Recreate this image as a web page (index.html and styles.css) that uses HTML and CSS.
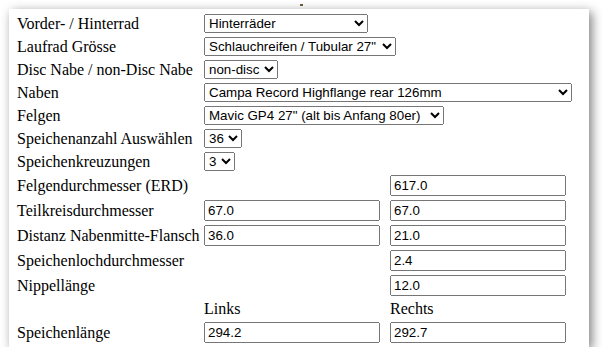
FILE: index.html
```html
<!DOCTYPE html>
<html>
<head>
    <meta charset="utf-8">
    <title>Speichenlängen Rechner</title>
    <link rel="stylesheet" href="styles.css">
</head>
<body>
    <span class="crumb"></span>
    <div class="sheet">
        <table class="calc">
            <tr>
                <td class="lbl">Vorder- / Hinterrad</td>
                <td colspan="2"><select class="sel-rad"><option>Hinterräder</option><option>Vorderräder</option></select></td>
            </tr>
            <tr>
                <td class="lbl">Laufrad Grösse</td>
                <td colspan="2"><select class="sel-size"><option>Schlauchreifen / Tubular 27"</option></select></td>
            </tr>
            <tr>
                <td class="lbl">Disc Nabe / non-Disc Nabe</td>
                <td colspan="2"><select class="sel-disc"><option>non-disc</option><option>disc</option></select></td>
            </tr>
            <tr>
                <td class="lbl">Naben</td>
                <td colspan="2"><select class="sel-hub"><option>Campa Record Highflange rear 126mm</option></select></td>
            </tr>
            <tr>
                <td class="lbl">Felgen</td>
                <td colspan="2"><select class="sel-rim"><option>Mavic GP4 27" (alt bis Anfang 80er)</option></select></td>
            </tr>
            <tr>
                <td class="lbl">Speichenanzahl Auswählen</td>
                <td colspan="2"><select class="sel-count"><option>36</option><option>32</option><option>28</option></select></td>
            </tr>
            <tr>
                <td class="lbl">Speichenkreuzungen</td>
                <td colspan="2"><select class="sel-cross"><option>3</option><option>2</option><option>1</option></select></td>
            </tr>
            <tr>
                <td class="lbl">Felgendurchmesser (ERD)</td>
                <td class="col"></td>
                <td class="col"><input type="text" value="617.0"></td>
            </tr>
            <tr>
                <td class="lbl">Teilkreisdurchmesser</td>
                <td class="col"><input type="text" value="67.0"></td>
                <td class="col"><input type="text" value="67.0"></td>
            </tr>
            <tr>
                <td class="lbl">Distanz Nabenmitte-Flansch</td>
                <td class="col"><input type="text" value="36.0"></td>
                <td class="col"><input type="text" value="21.0"></td>
            </tr>
            <tr>
                <td class="lbl">Speichenlochdurchmesser</td>
                <td class="col"></td>
                <td class="col"><input type="text" value="2.4"></td>
            </tr>
            <tr>
                <td class="lbl">Nippellänge</td>
                <td class="col"></td>
                <td class="col"><input type="text" value="12.0"></td>
            </tr>
            <tr>
                <td class="lbl"></td>
                <td class="col">Links</td>
                <td class="col">Rechts</td>
            </tr>
            <tr>
                <td class="lbl">Speichenlänge</td>
                <td class="col"><input type="text" value="294.2"></td>
                <td class="col"><input type="text" value="292.7"></td>
            </tr>
        </table>
    </div>
</body>
</html>
```

FILE: styles.css
```css
body {
    margin: 0px;
    padding: 9px 0px 0px 9px;
    background-color: #fff;
    color: #000;
    font: 16px "Liberation Serif", "Times New Roman", serif;
}

/* leftover pixel of the cut-off toolbar above the capture */
.crumb {
    position: absolute;
    left: 300px;
    top: 4px;
    width: 3px;
    height: 2px;
    background-color: #6b5a3a;
}

.sheet {
    box-sizing: border-box;
    width: 580px;
    height: 338px;
    padding: 2px 0px 0px 5px;
    background-color: #fff;
    box-shadow: 3px 3px 10px rgba(0, 0, 0, 0.5);
}

.calc {
    border-spacing: 2px;
}

    .calc td {
        padding: 1px;
        line-height: 18px;
        white-space: nowrap;
    }

    .calc .lbl {
        width: 183px;
    }

    .calc .col {
        width: 182px;
    }

    .calc select,
    .calc input {
        display: block;
        box-sizing: border-box;
        margin: 0px;
        font: 13.33px "Liberation Sans", Arial, sans-serif;
        color: #000;
    }

    .calc select {
        height: 19px;
    }

    .calc input {
        width: 176px;
        height: 21px;
    }

.sel-rad { width: 164px; }
.sel-size { width: 192px; }
.sel-disc { width: 74px; }
.sel-hub { width: 368px; }
.sel-rim { width: 240px; }
.sel-count { width: 38px; }
.sel-cross { width: 31px; }
```
